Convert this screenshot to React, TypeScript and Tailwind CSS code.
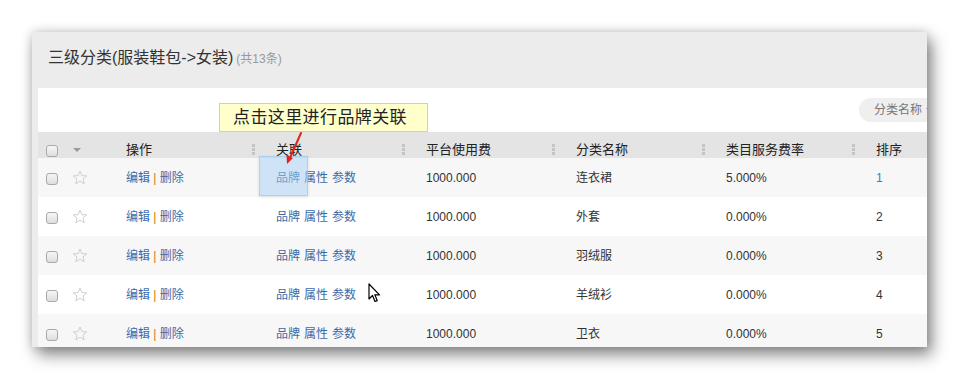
import React from "react";

const rows = [
  { name: "连衣裙", rate: "5.000%", sort: "1" },
  { name: "外套", rate: "0.000%", sort: "2" },
  { name: "羽绒服", rate: "0.000%", sort: "3" },
  { name: "羊绒衫", rate: "0.000%", sort: "4" },
  { name: "卫衣", rate: "0.000%", sort: "5" },
];

function Checkbox() {
  return (
    <div className="w-[12px] h-[12px] rounded-[3px] border border-[#a9a9a9] bg-gradient-to-b from-[#f6f6f6] to-[#dedede]" />
  );
}

function Star() {
  return (
    <svg width="16" height="15" viewBox="0 0 16 15">
      <path
        d="M8 1 L9.9 5.6 L14.8 5.9 L11 9 L12.2 13.8 L8 11.2 L3.8 13.8 L5 9 L1.2 5.9 L6.1 5.6 Z"
        fill="none"
        stroke="#cfcfcf"
        strokeWidth="1"
        strokeLinejoin="round"
      />
    </svg>
  );
}

function Grip() {
  return (
    <div className="flex flex-col gap-[1px] mr-[1px] mb-[2px]">
      <div className="w-[3px] h-[3px] bg-[#c4c4c4]" />
      <div className="w-[3px] h-[3px] bg-[#c4c4c4]" />
      <div className="w-[3px] h-[3px] bg-[#c4c4c4]" />
    </div>
  );
}

function HeadCell({ label, last }: { label: string; last?: boolean }) {
  return (
    <div className={`${last ? "flex-1" : "w-[150px]"} flex items-end justify-between pl-[20px]`}>
      <span className="text-[13px] leading-[15px] text-[#222]">{label}</span>
      {!last && <Grip />}
    </div>
  );
}

export default function App() {
  return (
    <div className="w-[959px] h-[379px] bg-white pt-[32px] pl-[32px] font-['Liberation_Sans','Noto_Sans_CJK_SC',sans-serif]">
      <div className="relative w-[895px] h-[315px] overflow-hidden bg-[#ececec] shadow-[5px_8px_15px_rgba(0,0,0,0.45),0_0_10px_rgba(0,0,0,0.18)]">
        {/* Title bar */}
        <div className="h-[56px] pl-[16px] pt-[16px] flex items-baseline">
          <span className="text-[16px] leading-[20px] text-[#333]">三级分类(服装鞋包-&gt;女装)</span>
          <span className="ml-[3px] text-[12px] text-[#999]">(共13条)</span>
        </div>

        {/* Body */}
        <div className="pl-[6px]">
          <div className="w-[941px] bg-white">
            {/* Toolbar */}
            <div className="h-[44px] flex justify-end items-start pt-[10px] pr-[10px]">
              <div className="w-[110px] h-[24px] rounded-full bg-[#efefef] flex items-center pl-[15px] text-[12px] text-[#777]">
                <span>分类名称</span>
                <svg className="ml-[4px]" width="7" height="4" viewBox="0 0 7 4">
                  <path d="M0 0 L7 0 L3.5 4 Z" fill="#888" />
                </svg>
              </div>
            </div>

            {/* Header */}
            <div className="h-[26px] bg-[#e4e4e4] flex pb-[1px]">
              <div className="w-[28px] pl-[8px] flex items-end">
                <Checkbox />
              </div>
              <div className="w-[40px] pl-[7px] flex items-end pb-[5px]">
                <div className="w-0 h-0 border-l-[4px] border-r-[4px] border-t-[4px] border-l-transparent border-r-transparent border-t-[#9a9a9a]" />
              </div>
              <HeadCell label="操作" />
              <HeadCell label="关联" />
              <HeadCell label="平台使用费" />
              <HeadCell label="分类名称" />
              <HeadCell label="类目服务费率" />
              <HeadCell label="排序" last />
            </div>

            {/* Rows */}
            {rows.map((r, i) => (
              <div
                key={i}
                className={`h-[39px] flex items-center text-[12px] text-[#333] ${i % 2 === 0 ? "bg-[#f7f7f7]" : "bg-white"}`}
              >
                <div className="w-[28px] pl-[8px] pt-[3px]">
                  <Checkbox />
                </div>
                <div className="w-[40px] pl-[6px]">
                  <Star />
                </div>
                <div className="w-[150px] pl-[20px] text-[#3c6aa8]">
                  编辑 <span className="text-[#d07810]">|</span> 删除
                </div>
                <div className="w-[150px] pl-[20px] text-[#3c6aa8] flex gap-[4px]">
                  <span>品牌</span>
                  <span>属性</span>
                  <span>参数</span>
                </div>
                <div className="w-[150px] pl-[20px]">1000.000</div>
                <div className="w-[150px] pl-[20px]">{r.name}</div>
                <div className="w-[150px] pl-[20px]">{r.rate}</div>
                <div className={`flex-1 pl-[20px] ${i === 0 ? "text-[#3a7bd5]" : ""}`}>{r.sort}</div>
              </div>
            ))}
          </div>
        </div>

        {/* Annotation tooltip */}
        <div className="absolute left-[187px] top-[71px] w-[209px] h-[29px] bg-[#ffffcc] border border-[#d2d2a8] flex items-center pl-[13px] text-[17px] tracking-[0.4px] text-[#222]">
          点击这里进行品牌关联
        </div>

        {/* Highlight box */}
        <div className="absolute left-[227px] top-[124px] w-[49px] h-[40px] bg-[rgba(165,210,245,0.5)] border border-[rgba(150,195,235,0.55)] shadow-[0_1px_3px_rgba(0,0,0,0.12)]" />

        {/* Red arrow */}
        <svg className="absolute left-[248px] top-[98px]" width="26" height="40" viewBox="0 0 26 40">
          <line x1="21" y1="3" x2="9.5" y2="29" stroke="#e3211b" strokeWidth="2" strokeLinecap="round" />
          <path d="M7 34 L6.5 25 L13 28 Z" fill="#e3211b" />
        </svg>

        {/* Mouse cursor */}
        <svg className="absolute left-[336px] top-[251px]" width="14" height="21" viewBox="0 0 14 21">
          <path
            d="M1 1 L1 16 L4.5 12.5 L7 18.5 L9.2 17.6 L6.8 11.8 L11.5 11.8 Z"
            fill="#fff"
            stroke="#000"
            strokeWidth="1.2"
            strokeLinejoin="round"
          />
        </svg>
      </div>
    </div>
  );
}
